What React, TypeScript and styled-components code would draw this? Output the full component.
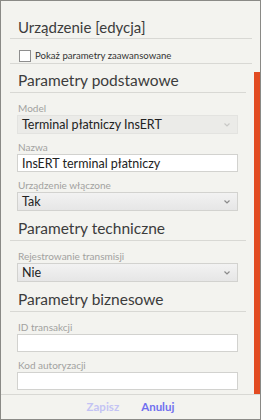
import React from 'react';
import styled, { createGlobalStyle } from 'styled-components';

const GlobalStyle = createGlobalStyle`
  html, body {
    margin: 0;
    padding: 0;
    background: #f3f3ef;
  }
  * {
    box-sizing: border-box;
  }
`;

const Window = styled.div`
  width: 261px;
  height: 420px;
  display: flex;
  flex-direction: column;
  background: #f3f3ef;
  border: 1px solid #8a8a86;
  font-family: Lato, 'Open Sans', sans-serif;
  color: #333;
  overflow: hidden;
`;

const Header = styled.header`
  padding: 0 8px 0 9px;
`;

const Title = styled.h1`
  margin: 0;
  height: 38px;
  display: flex;
  align-items: flex-end;
  padding: 0 0 1px 8px;
  font-size: 15px;
  font-weight: 400;
  line-height: 20px;
  color: #3c3c3c;
  border-bottom: 1px solid #d8d8d4;
`;

const CheckRow = styled.label`
  height: 25px;
  display: flex;
  align-items: flex-end;
  gap: 4px;
  padding: 0 0 1px 9px;
  font-size: 9.6px;
  line-height: 12px;
  color: #333;
  border-bottom: 1px solid #d8d8d4;
`;

const CheckBox = styled.span`
  width: 12px;
  height: 12px;
  background: #fff;
  border: 1px solid #8e8e8e;
`;

const ScrollArea = styled.div`
  position: relative;
  flex: 1;
  overflow: hidden;
  padding: 5px 14px 0 9px;
`;

const Thumb = styled.div`
  position: absolute;
  top: 8px;
  bottom: 0;
  right: 0;
  width: 6px;
  background: #e24b21;
`;

const Section = styled.section`
  display: flex;
  flex-direction: column;
`;

const SectionTitle = styled.h2`
  margin: 0 0 8px;
  height: 24px;
  display: flex;
  align-items: flex-end;
  padding: 0 0 2px 8px;
  font-size: 15.5px;
  font-weight: 400;
  line-height: 19px;
  color: #3c3c3c;
  border-bottom: 1px solid #d8d8d4;
`;

const Field = styled.div`
  display: flex;
  flex-direction: column;
  margin: 0 8px 6px 7px;
`;

const Label = styled.span`
  height: 14px;
  padding-left: 1px;
  font-size: 10px;
  line-height: 14px;
  color: #a2a2a0;
`;

const Box = styled.div<{ $kind?: 'input' | 'select' | 'disabled' }>`
  height: ${(p) => (p.$kind === 'input' ? '18px' : '19px')};
  display: flex;
  align-items: center;
  justify-content: space-between;
  padding: 0 7px 0 4px;
  font-size: 12.5px;
  color: #222;
  border: 1px solid
    ${(p) => (p.$kind === 'disabled' ? '#e3e3e0' : '#d2d2cf')};
  background: ${(p) =>
    p.$kind === 'input'
      ? '#fff'
      : p.$kind === 'disabled'
        ? '#ebebe8'
        : 'linear-gradient(#f2f2f2, #e6e6e6)'};
`;

const Chevron = styled.svg<{ $muted?: boolean }>`
  width: 6px;
  height: 4px;
  stroke: ${(p) => (p.$muted ? '#c8c8c6' : '#8a8a8a')};
  stroke-width: 1.2;
  fill: none;
`;

const Footer = styled.footer`
  height: 25px;
  display: flex;
  align-items: center;
  justify-content: center;
  gap: 22px;
  border-top: 1px solid #d8d8d4;
  padding-bottom: 1px;
`;

const ActionButton = styled.button<{ $disabled?: boolean }>`
  border: 0;
  background: none;
  padding: 0;
  font-family: inherit;
  font-size: 11.5px;
  font-weight: 700;
  color: ${(p) => (p.$disabled ? '#c3c3f4' : '#6f6ff0')};
  cursor: ${(p) => (p.$disabled ? 'default' : 'pointer')};
`;

const Arrow: React.FC<{ muted?: boolean }> = ({ muted }) => (
  <Chevron $muted={muted} viewBox="0 0 6 4">
    <path d="M0.5 0.5 L3 3 L5.5 0.5" />
  </Chevron>
);

const App: React.FC = () => {
  return (
    <>
      <GlobalStyle />
      <Window>
        <Header>
          <Title>Urządzenie [edycja]</Title>
          <CheckRow>
            <CheckBox />
            Pokaż parametry zaawansowane
          </CheckRow>
        </Header>
        <ScrollArea>
          <Section>
            <SectionTitle>Parametry podstawowe</SectionTitle>
            <Field>
              <Label>Model</Label>
              <Box $kind="disabled">
                Terminal płatniczy InsERT
                <Arrow muted />
              </Box>
            </Field>
            <Field>
              <Label>Nazwa</Label>
              <Box $kind="input">InsERT terminal płatniczy</Box>
            </Field>
            <Field>
              <Label>Urządzenie włączone</Label>
              <Box $kind="select">
                Tak
                <Arrow />
              </Box>
            </Field>
          </Section>
          <Section>
            <SectionTitle>Parametry techniczne</SectionTitle>
            <Field>
              <Label>Rejestrowanie transmisji</Label>
              <Box $kind="select">
                Nie
                <Arrow />
              </Box>
            </Field>
          </Section>
          <Section>
            <SectionTitle>Parametry biznesowe</SectionTitle>
            <Field>
              <Label>ID transakcji</Label>
              <Box $kind="input" />
            </Field>
            <Field>
              <Label>Kod autoryzacji</Label>
              <Box $kind="input" />
            </Field>
            <Field>
              <Box $kind="input" />
            </Field>
          </Section>
          <Thumb />
        </ScrollArea>
        <Footer>
          <ActionButton $disabled>Zapisz</ActionButton>
          <ActionButton>Anuluj</ActionButton>
        </Footer>
      </Window>
    </>
  );
};

export default App;
